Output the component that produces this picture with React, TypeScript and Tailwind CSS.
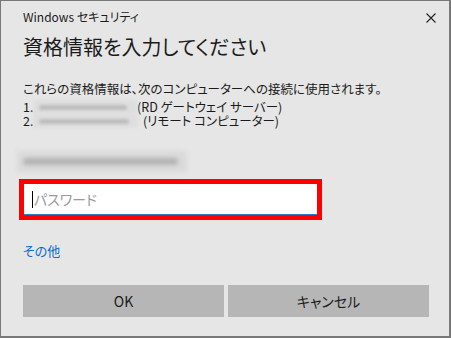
import React from "react";

export default function App() {
  return (
    <div className="w-[451px] h-[338px] bg-[#e6e6e6] border-l border-t border-r-2 border-b-2 border-[#787878] flex flex-col font-['Noto_Sans_CJK_JP',sans-serif] [font-feature-settings:'palt'] text-[#1b1b1b]">
      <div className="flex items-start justify-between pl-[22px] pr-[13px] pt-[8px]">
        <span className="text-[12px] leading-[16px]">Windows セキュリティ</span>
        <svg width="10" height="10" viewBox="0 0 10 10" className="mt-[4px]">
          <path d="M0.5 0.5 L9.5 9.5 M9.5 0.5 L0.5 9.5" stroke="#222" strokeWidth="1.1" />
        </svg>
      </div>
      <div className="pl-[22px] mt-[8px] text-[20px] leading-[28px]">資格情報を入力してください</div>
      <div className="pl-[22px] mt-[20px] text-[12.5px] leading-[16px]">
        <div>これらの資格情報は、次のコンピューターへの接続に使用されます。</div>
        <div className="mt-[3px] flex items-center h-[14px] leading-[14px]">
          <span className="w-[10px]">1.</span>
          <span className="w-[104px] h-[14px] bg-[#dedede] flex items-center px-[6px] blur-[1.5px]">
            <span className="w-[88px] h-[5px] bg-[#bdbdbd] rounded"></span>
          </span>
          <span>(RD ゲートウェイ サーバー)</span>
        </div>
        <div className="flex items-center h-[14px] leading-[14px]">
          <span className="w-[10px]">2.</span>
          <span className="w-[105px] h-[14px] bg-[#dedede] flex items-center px-[6px] blur-[1.5px]">
            <span className="w-[90px] h-[5px] bg-[#bdbdbd] rounded"></span>
          </span>
          <span className="ml-[5px]">(リモート コンピューター)</span>
        </div>
      </div>
      <div className="ml-[16px] mt-[23px] w-[170px] h-[21px] bg-[#dadada] flex items-center px-[6px] blur-[2px]">
        <span className="w-[155px] h-[7px] bg-[#b3b3b3] rounded"></span>
      </div>
      <div className="ml-[18px] mt-[7px] w-[303px] h-[41px] border-[5px] border-[#ff0000] bg-white">
        <div className="h-full border-b border-[#2f79c8] flex items-center pl-[8px]">
          <span className="w-px h-[17px] bg-black"></span>
          <span className="text-[14px] leading-[20px] text-[#9a9a9a] ml-[1px]">パスワード</span>
        </div>
      </div>
      <div className="pl-[22px] mt-[22px] text-[13px] leading-[18px] text-[#0a6ccc]">その他</div>
      <div className="mt-auto mb-[19px] ml-[22px] flex gap-[4px]">
        <button className="w-[201px] h-[32px] bg-[#b6b6b6] text-[14px]">OK</button>
        <button className="w-[201px] h-[32px] bg-[#b6b6b6] text-[14px]">キャンセル</button>
      </div>
    </div>
  );
}
